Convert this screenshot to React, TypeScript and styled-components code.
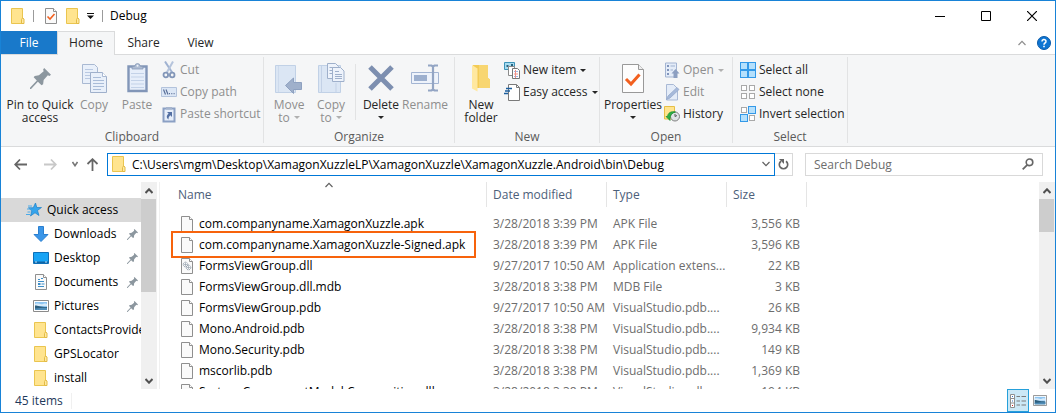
import React from "react";
import styled, { createGlobalStyle, css } from "styled-components";

const Global = createGlobalStyle`
  *, *::before, *::after { box-sizing: border-box; }
  html, body, #root { height: 100%; }
  body { margin: 0; background: #fff; overflow: hidden; }
  body, button, input, table {
    font-family: "Open Sans", "Noto Sans", "Segoe UI", sans-serif;
    font-size: 12px;
    line-height: 16px;
    color: #000;
  }
  button { border: 0; padding: 0; margin: 0; background: none; cursor: default; }
  svg { display: block; flex: none; }
`;

/* ---------- window frame ---------- */

const Window = styled.main`
  display: flex;
  flex-direction: column;
  height: 100vh;
  border: 1px solid #1883d7;
  background: #fff;
`;

const TitleBar = styled.header`
  display: flex;
  align-items: center;
  flex: none;
  height: 30px;
  padding-left: 10px;
`;

const QuickTool = styled.button<{ $gap?: number }>`
  margin-right: ${(p) => p.$gap ?? 8}px;
`;

const TitleDivider = styled.span<{ $gap: number }>`
  width: 1px;
  height: 12px;
  margin-right: ${(p) => p.$gap}px;
  background: #9b9b9b;
`;

const Title = styled.h1`
  margin: 0;
  flex: 1;
  font-size: 12px;
  font-weight: 400;
`;

const CaptionButton = styled.button`
  display: grid;
  place-items: center;
  width: 46px;
  height: 30px;
`;

/* ---------- ribbon ---------- */

const Tabs = styled.nav`
  display: flex;
  align-items: center;
  flex: none;
  height: 23px;
`;

const Tab = styled.button<{ $kind?: "file" | "active" }>`
  width: 57px;
  height: 23px;
  color: #262626;
  ${(p) => p.$kind === "file" && css`
    width: 56px;
    background: #1979ca;
    color: #fff;
  `}
  ${(p) => p.$kind === "active" && css`
    position: relative;
    width: 58px;
    height: 24px;
    margin-bottom: -1px;
    padding-bottom: 1px;
    background: #f5f6f7;
    border: 1px solid #dadbdc;
    border-bottom: 0;
  `}
`;

const TabSpacer = styled.span`
  flex: 1;
`;

const TabTool = styled.button`
  display: grid;
  place-items: center;
  width: 22px;
  height: 22px;
`;

const Ribbon = styled.section`
  display: flex;
  flex: none;
  height: 93px;
  padding: 2px 0 3px;
  background: #f5f6f7;
  border-top: 1px solid #dadbdc;
  border-bottom: 1px solid #dadbdc;
`;

const Group = styled.section<{ $width: number }>`
  display: flex;
  flex-direction: column;
  flex: none;
  width: ${(p) => p.$width}px;
  border-right: 1px solid #e2e3e4;
`;

const GroupBody = styled.div<{ $pad?: number }>`
  display: flex;
  flex: 1;
  padding: 2px 0 0 ${(p) => p.$pad ?? 0}px;
`;

const GroupTitle = styled.h2`
  margin: 0;
  font-size: 12px;
  font-weight: 400;
  line-height: 12px;
  text-align: center;
  color: #5a5a5a;
`;

const BigButton = styled.button<{ $width: number }>`
  display: flex;
  flex-direction: column;
  align-items: center;
  width: ${(p) => p.$width}px;
  padding-top: 3px;
  line-height: 13px;
  white-space: nowrap;
  color: #262626;
  &:disabled { color: #8e8e8e; }
`;

const BigIcon = styled.span`
  display: grid;
  place-items: center;
  height: 32px;
  margin-bottom: 4px;
`;

const BigLine = styled.span`
  display: flex;
  align-items: center;
  justify-content: center;
  gap: 4px;
  height: 13px;
`;

const InnerDivider = styled.span`
  width: 1px;
  height: 56px;
  margin: 5px 4px 0 4px;
  background: #e2e3e4;
`;

const SmallList = styled.div<{ $pad?: number }>`
  display: flex;
  flex-direction: column;
  align-items: flex-start;
  padding-left: ${(p) => p.$pad ?? 0}px;
`;

const SmallButton = styled.button`
  display: flex;
  align-items: center;
  gap: 3px;
  height: 22px;
  white-space: nowrap;
  color: #262626;
  &:disabled { color: #8e8e8e; }
`;

const SmallArrow = styled.span`
  margin-left: 1px;
`;

/* ---------- address row ---------- */

const AddressRow = styled.div`
  display: flex;
  align-items: center;
  flex: none;
  height: 35px;
  padding: 0 12px 1px 11px;
`;

const NavButton = styled.button<{ $width: number }>`
  display: grid;
  place-items: center;
  width: ${(p) => p.$width}px;
  height: 22px;
`;

const AddressBox = styled.label`
  display: flex;
  align-items: center;
  flex: 1;
  min-width: 0;
  height: 23px;
  padding: 0 4px;
  border: 1px solid #0078d7;
`;

const TextInput = styled.input`
  flex: 1;
  min-width: 0;
  height: 20px;
  margin: 0;
  padding: 0;
  border: 0;
  outline: 0;
  background: none;
  &::placeholder { color: #6d6d6d; opacity: 1; }
`;

const AddressInput = styled(TextInput)`
  padding-left: 6px;
`;

const RefreshButton = styled.button`
  display: grid;
  place-items: center;
  width: 18px;
  height: 23px;
  margin-right: 12px;
  border: 1px solid #d9d9d9;
  border-left: 0;
`;

const SearchBox = styled.label`
  display: flex;
  align-items: center;
  flex: 0 1 238px;
  height: 23px;
  padding: 0 8px;
  border: 1px solid #d9d9d9;
`;

/* ---------- body ---------- */

const Body = styled.div`
  display: flex;
  flex: 1;
  min-height: 0;
  overflow: hidden;
`;

const Sidebar = styled.nav`
  flex: none;
  width: 140px;
  padding-top: 16px;
  overflow: hidden;
`;

const Place = styled.a<{ $root?: boolean }>`
  display: flex;
  align-items: center;
  height: 24px;
  padding-left: ${(p) => (p.$root ? 25 : 32)}px;
  background: ${(p) => (p.$root ? "#d9d9d9" : "transparent")};
  color: #000;
  text-decoration: none;
  white-space: nowrap;
`;

const PlaceIcon = styled.span`
  display: grid;
  place-items: center;
  width: 16px;
  margin-right: 5px;
  flex: none;
`;

const PlaceName = styled.span`
  flex: 1;
`;

const PlacePin = styled.span`
  margin-right: 3px;
`;

const ScrollBar = styled.div`
  display: flex;
  flex-direction: column;
  flex: none;
  width: 16px;
  background: #f0f0f0;
`;

const ScrollArrow = styled.button`
  display: grid;
  place-items: center;
  width: 16px;
  height: 17px;
`;

const ScrollTrack = styled.div`
  flex: 1;
`;

const ScrollThumb = styled.div<{ $share: number }>`
  width: 15px;
  height: ${(p) => p.$share}%;
  background: #cdcdcd;
`;

const Files = styled.section`
  flex: 1;
  min-width: 0;
  margin-left: 2px;
  padding-left: 12px;
  border-left: 1px solid #f0f0f0;
  overflow: hidden;
`;

const FileTable = styled.table`
  width: 100%;
  table-layout: fixed;
  border-collapse: separate;
  border-spacing: 0;
  tbody::before {
    content: "";
    display: block;
    height: 6px;
  }
`;

const Col = styled.col<{ $width?: number }>`
  width: ${(p) => (p.$width ? `${p.$width}px` : "auto")};
`;

const Head = styled.th`
  position: relative;
  height: 25px;
  padding: 0 0 0 6px;
  border-right: 1px solid #e5e5e5;
  font-weight: 400;
  text-align: left;
  color: #4c607a;
`;

const SortMark = styled.span`
  position: absolute;
  top: 0;
  left: 50%;
  margin-left: -4px;
`;

const Cell = styled.td`
  height: 21px;
  padding: 0 0 0 6px;
  white-space: nowrap;
  color: #6d6d6d;
`;

const SizeCell = styled(Cell)`
  padding-right: 7px;
  text-align: right;
`;

const NameCell = styled(Cell)`
  padding-left: 2px;
`;

const FileName = styled.span<{ $marked?: boolean }>`
  display: inline-flex;
  align-items: center;
  gap: 6px;
  height: 21px;
  padding: 0 8px 0 7px;
  vertical-align: top;
  color: #000;
  ${(p) => p.$marked && css`
    outline: 2px solid #f7630c;
    outline-offset: 1px;
  `}
`;

/* ---------- status bar ---------- */

const StatusBar = styled.footer`
  display: flex;
  align-items: center;
  flex: none;
  height: 23px;
  padding: 0 4px 0 14px;
  color: #1e395b;
`;

const Count = styled.span`
  flex: 1;
`;

const CountLabel = styled.span`
  display: inline-block;
  padding-right: 8px;
  border-right: 1px solid #f0f0f0;
`;

const ViewButton = styled.button<{ $on?: boolean }>`
  display: grid;
  place-items: center;
  width: 22px;
  height: 23px;
  border: 1px solid ${(p) => (p.$on ? "#26a0da" : "transparent")};
  background: ${(p) => (p.$on ? "#cbe8f6" : "transparent")};
`;

/* ---------- drawings ---------- */

const Folder = () => (
  <svg width="14" height="16" viewBox="0 0 14 16">
    <path d="M.5.5h11v9.5l1 1v4.5H.5z" fill="#ffe48f" stroke="#eac54f" />
    <path d="M10.5 15.5v-4l1-1.5 1.5 1v4.5z" fill="#ffe9a2" stroke="#e3bb45" />
  </svg>
);

const Page = ({ children }: { children?: React.ReactNode }) => (
  <svg width="12" height="16" viewBox="0 0 12 16">
    <path d="M.5.5h8l3 3v12H.5z" fill="#fafafa" stroke="#8f8f8f" />
    <path d="M8.5.5v3h3" fill="#fff" stroke="#8f8f8f" />
    {children}
  </svg>
);

const Gears = () => (
  <Page>
    <g fill="none" stroke="#8795a3">
      <circle cx="4.5" cy="6.5" r="2.3" strokeDasharray="1.2 .6" />
      <circle cx="4.5" cy="6.5" r=".7" />
      <circle cx="7.5" cy="9.5" r="2.3" strokeDasharray="1.2 .6" />
      <circle cx="7.5" cy="9.5" r=".7" />
    </g>
  </Page>
);

const Pushpin = ({ size, color = "#8c979f" }: { size: number; color?: string }) => (
  <svg width={size} height={size} viewBox="0 0 20 20">
    <path d="M13.5 0 20 6.5 18.5 7.5 17 7 13 11.5 12.5 15.5 11 16.5 7.5 13 1 20H0v-1.2L6.5 12 3.5 8.7 4.5 7.5 8.5 7 13 3 12.5 1.5z" fill={color} />
  </svg>
);

const Triangle = ({ color = "#262626" }: { color?: string }) => (
  <svg width="6" height="3" viewBox="0 0 6 3">
    <path d="M0 0h6L3 3z" fill={color} />
  </svg>
);

const SheetPair = () => (
  <svg width="25" height="29" viewBox="0 0 25 29">
    <g fill="#e9f0fa" stroke="#a9b9d2">
      <path d="M.5.5h12l3 3v16H.5z" />
      <path d="M3 5.5h8M3 8.5h10M3 11.5h6M3 14.5h6" stroke="#b9c9e2" />
      <path d="M8.5 8.5h12l4 4v16h-16z" stroke="#9fb0cb" />
      <path d="M20.5 8.5v4h4" fill="#fff" />
      <path d="M11 13.5h8M11 16.5h11M11 19.5h11M11 22.5h11M11 25.5h8" stroke="#a9bcd8" />
    </g>
  </svg>
);

const Clipboard = () => (
  <svg width="21" height="30" viewBox="0 0 21 30">
    <path d="M1.5 3.5h18v24.5h-18z" fill="#e6eefa" stroke="#8296b8" strokeWidth="2.4" />
    <path d="M5 6V4l3-1a2.500 2.500 0 0 1 5 0l3 1v2z" fill="#aebcd2" stroke="#8c9dba" strokeWidth=".8" />
    <circle cx="10.5" cy="2.8" r="1" fill="#eef3fa" />
    <path d="M4 10.5h13M4 14h13M4 17.5h13M4 21h13M4 24.5h13" stroke="#c3d2e8" />
  </svg>
);

const Scissors = () => (
  <svg width="16" height="18" viewBox="0 0 16 18" fill="none">
    <path d="M4 .5 11.500 12" stroke="#9fb2d1" strokeWidth="2" />
    <path d="M12 .5 5.500 12" stroke="#b5c4dc" strokeWidth="2" />
    <circle cx="4.8" cy="14" r="2.300" stroke="#8296b8" strokeWidth="1.800" />
    <circle cx="11.2" cy="14" r="2.300" stroke="#8296b8" strokeWidth="1.800" />
  </svg>
);

const PathTag = () => (
  <svg width="16" height="10" viewBox="0 0 16 10">
    <path d="M.5.5h15v9H.5z" fill="#dce7f6" stroke="#b3c3dc" />
    <path d="m2.500 2.500 2 5m.5-5 2 5" stroke="#5a6f98" fill="none" strokeWidth="1.200" />
    <path d="M8 6h1v1.200H8zM10.300 6h1v1.200h-1zM12.600 6h1v1.200h-1z" fill="#5a6f98" />
  </svg>
);

const ShortcutClip = () => (
  <svg width="16" height="17" viewBox="0 0 16 17">
    <path d="M2.500 2.500h11v13h-11z" fill="#e6eefa" stroke="#8ba0c4" strokeWidth="2" />
    <path d="M5 1h6v2.500H5z" fill="#a5b4cd" />
    <path d="M6 6h5v5L9.300 9.300C8 10.500 7.500 11.500 7.500 13.500 5 11.500 5.500 9.500 7.600 7.600z" fill="#5470a3" />
  </svg>
);

const MoveTo = () => (
  <svg width="28" height="31" viewBox="0 0 28 31">
    <path d="M.5 2.500h20v27H.5z" fill="#dbe6f4" stroke="#c1d1e6" />
    <path d="M3.500 3v26" stroke="#cddaec" />
    <path d="m10.500 22.500 8-7.500v4.500h8v7h-8V30.500z" fill="#9fb0cb" stroke="#8ea1c0" />
  </svg>
);

const CopyTo = () => (
  <svg width="27" height="31" viewBox="0 0 27 31">
    <path d="M.5 2.500h22v27H.5z" fill="#dbe6f4" stroke="#c1d1e6" />
    <path d="M3.500 3v26M18 29V20" stroke="#c3d1e6" />
    <g fill="#eef3fb" stroke="#9fb0cb">
      <path d="M9.500.5h8l3 3v12h-11z" />
      <path d="M11.500 4.500h5M11.500 7.500h3M11.500 10.500h3" />
      <path d="M14.500 4.500h8l3.500 3.500v10.500H14.500z" />
      <path d="M17 8.500h4M17 11.500h7M17 13.500h7M17 15.500h7" />
    </g>
  </svg>
);

const Cross = () => (
  <svg width="26" height="26" viewBox="0 0 26 26">
    <path d="m2 2 22 22M24 2 2 24" stroke="#7d8fb0" strokeWidth="5" />
  </svg>
);

const RenameIcon = () => (
  <svg width="28" height="28" viewBox="0 0 28 28" fill="none">
    <path d="M.5 8.500h27v11H.5z" fill="#eef3fb" stroke="#a3b5d3" />
    <path d="M3 11h13v6H3z" fill="#9db0cf" />
    <path d="M17 1.500h3.500l1.500 1 1.500-1H27M17 26.500h3.500l1.500-1 1.500 1H27M22 2v24" stroke="#93a5c4" strokeWidth="2.200" />
  </svg>
);

const NewFolder = () => (
  <svg width="20" height="28" viewBox="0 0 20 28">
    <path d="M2 1h15v13l2 1.500V24H3z" fill="#f3cb55" />
    <path d="M8 1h9v13l2 1.500V24H8z" fill="#f8d671" />
    <path d="M1 1 6.500 4.500V27.500L1 24.500z" fill="#ffe8a0" />
  </svg>
);

const NewItem = () => (
  <svg width="16" height="17" viewBox="0 0 16 17">
    <path d="M.5.5h10v7H.5z" fill="#a8dcf0" stroke="#3c93b8" />
    <path d="M2.500 3h2v2h-2zM7 2h2v2H7z" fill="#27617e" />
    <path d="M4.500 4.500h6v9h-6z" fill="#fff" stroke="#8b8b8b" />
    <path d="M8.500 6.500h5l2 2v8h-7z" fill="#fff" stroke="#777" />
    <path d="M10 9.500h4M10 14.500h4" stroke="#9bb7e6" />
    <path d="M10 12h4M11.500 8v8" stroke="#ef8f86" />
  </svg>
);

const EasyAccess = () => (
  <svg width="16" height="17" viewBox="0 0 16 17">
    <path d="M4.500.5h8l3 3v13h-11z" fill="#fff" stroke="#7a7a7a" />
    <path d="M12.500.5v3h3" fill="none" stroke="#7a7a7a" />
    <path d="M2 4.500h6M1 7h5M0 9.500h4" stroke="#1c5f9e" strokeWidth="1.300" />
  </svg>
);

const Properties = () => (
  <svg width="22" height="29" viewBox="0 0 22 29">
    <path d="M.5.5h16l5 5v23H.5z" fill="#fdfdfd" stroke="#999" />
    <path d="M16.500.5v5h5" fill="#eee" stroke="#999" />
    <path d="m4 15 5 5 8.500-9.500" fill="none" stroke="#f2601f" strokeWidth="3" />
  </svg>
);

const OpenIcon = () => (
  <svg width="16" height="17" viewBox="0 0 16 17">
    <path d="M1.500 1h11v14h-11z" fill="#e4ecf8" stroke="#a3b4d2" />
    <path d="M3 3h2v2H3zM3 7h2v2H3zM3 11h2v2H3z" fill="#8094bb" />
    <path d="M6.500 4H11M6.500 8H9" stroke="#9fb2d1" />
    <path d="m11.500 7 4 4.500h-2V16h-4v-4.500h-2z" fill="#8c9fc1" />
  </svg>
);

const EditIcon = () => (
  <svg width="16" height="17" viewBox="0 0 16 17">
    <path d="M2.500.5h7l4 4v11.500h-11z" fill="#e4ecf8" stroke="#a9b9d5" />
    <path d="M13 3.500 15 5.500 6 14 2.500 15.500 4 12z" fill="#a6b9da" stroke="#96a9cc" strokeWidth=".8" />
  </svg>
);

const HistoryIcon = () => (
  <svg width="16" height="16" viewBox="0 0 16 16">
    <path d="M.5.5h10V13H.5z" fill="#ffe48f" stroke="#e6bf45" />
    <circle cx="11" cy="10.500" r="4.500" fill="#dfe4e6" stroke="#808080" />
    <path d="M11 8v2.500l2-1" fill="none" stroke="#555" />
    <path d="M2 10.500 6 14.500V12.500C6 9 8 7 11.500 6 7 4.800 3.800 7 3.500 10.500z" fill="#2fb045" stroke="#168b2d" strokeWidth=".7" />
  </svg>
);

const SelectTiles = ({ on }: { on: boolean[] }) => (
  <svg width="16" height="16" viewBox="0 0 16 16">
    {on.map((active, i) => {
      const x = (i % 2) * 8;
      const y = Math.floor(i / 2) * 8;
      return active
        ? <rect key={i} x={x + 0.5} y={y + 0.5} width="7" height="7" fill="#b5e0fc" stroke="#3399e8" />
        : <rect key={i} x={x + 1.5} y={y + 1.5} width="5" height="5" fill="#fff" stroke="#a9a9a9" />;
    })}
  </svg>
);

const Arrow = ({ turn = 0, color = "#666" }: { turn?: number; color?: string }) => (
  <svg width="13" height="13" viewBox="0 0 13 13">
    <path d="M6 1.500 1.200 6.500 6 11.500M1.500 6.500H13" fill="none" stroke={color} strokeWidth="1.800" transform={`rotate(${turn} 6.500 6.500)`} />
  </svg>
);

const Chevron = ({ up, width = 8, weight = 1.2, color = "#606060" }: { up?: boolean; width?: number; weight?: number; color?: string }) => (
  <svg width={width} height="6" viewBox={`0 0 ${width} 6`}>
    <path d={up ? `M.5 5 ${width / 2} 1.300 ${width - 0.5} 5` : `M.5 1 ${width / 2} 4.700 ${width - 0.5} 1`} fill="none" stroke={color} strokeWidth={weight} />
  </svg>
);

const Star = () => (
  <svg width="16" height="14" viewBox="0 0 16 14">
    <path d="m9.500 0 1.300 4.500h4.700l-4 3 1.500 5L9 9.800 4.500 13l1.300-5L2.500 4.800h4.700z" fill="#35a4ec" stroke="#1a7fc8" strokeWidth=".7" />
    <path d="M2 3h4M1 6h4M1.500 9h3M0 11.500h4" stroke="#4aaae8" />
  </svg>
);

const Download = () => (
  <svg width="16" height="16" viewBox="0 0 16 16">
    <path d="M5.500.5h5v8h4.500L8 15.500 1 8.500h4.500z" fill="#3b96e8" stroke="#2a7fd0" />
  </svg>
);

const Monitor = () => (
  <svg width="16" height="12" viewBox="0 0 16 12">
    <path d="M.5.5h15v11H.5z" fill="#18a4f5" stroke="#0e70b8" />
    <path d="M1 9.500h14V11H1z" fill="#0f64a5" />
    <path d="M2 10h2M12 10h2" stroke="#bfe5ff" />
  </svg>
);

const DocumentIcon = () => (
  <Page>
    <path d="M3 5.500h2M6 4.500h2M3 7.500h6M3 12.500h6M6.500 10h3" stroke="#3d8ec9" />
    <path d="M3 9h2.500v2H3z" fill="#3d8ec9" />
  </Page>
);

const Photo = ({ width = 16, height = 12 }: { width?: number; height?: number }) => (
  <svg width={width} height={height} viewBox="0 0 16 12" preserveAspectRatio="none">
    <path d="M.5.5h15v11H.5z" fill="#fff" stroke="#8b8b8b" />
    <path d="M2 2h12v8H2z" fill="#8fc6f2" />
    <path d="M2 4c3-1.500 5 1 8 0s3 0 4 0v2H2z" fill="#d7ebfa" />
    <path d="M2 5.500c3 0 5 1.500 12 1.500v3H2z" fill="#2d5f7e" />
    <path d="M2 8.500c5 0 8-1 12-.5v2H2z" fill="#4f8db8" />
  </svg>
);

const DetailsIcon = () => (
  <svg width="16" height="14" viewBox="0 0 16 14">
    <path d="M.5.5h4v13h-4zM.5 4.500h4M.5 9h4" fill="#fff" stroke="#8f8f8f" />
    <path d="M6.500 2.500H10M11.500 2.500H16M6.500 7H10M11.500 7H16M6.500 11H10M11.500 11H16" stroke="#7b7b7b" />
    <path d="M2 2h1v1H2zM2 6.500h1v1H2z" fill="#3273c4" />
    <path d="M2 11h1v1H2z" fill="#c22" />
  </svg>
);

/* ---------- pieces ---------- */

interface BigProps {
  icon: React.ReactNode;
  lines: string[];
  width: number;
  menu?: boolean;
  disabled?: boolean;
}

function Big({ icon, lines, width, menu, disabled }: BigProps) {
  const arrow = menu && <Triangle color={disabled ? "#b0b0b0" : "#262626"} />;
  return (
    <BigButton $width={width} disabled={disabled}>
      <BigIcon>{icon}</BigIcon>
      {lines.map((line, i) => (
        <BigLine key={line}>{line}{i === 1 && arrow}</BigLine>
      ))}
      {lines.length === 1 && <BigLine>{arrow}</BigLine>}
    </BigButton>
  );
}

interface SmallProps {
  icon: React.ReactNode;
  label: string;
  menu?: boolean;
  disabled?: boolean;
}

function Small({ icon, label, menu, disabled }: SmallProps) {
  return (
    <SmallButton disabled={disabled}>
      {icon}
      {label}
      {menu && <SmallArrow><Triangle color={disabled ? "#b0b0b0" : "#262626"} /></SmallArrow>}
    </SmallButton>
  );
}

function Scroller({ share }: { share: number }) {
  return (
    <ScrollBar>
      <ScrollArrow aria-label="Scroll up"><Chevron up weight={2} color="#505050" /></ScrollArrow>
      <ScrollTrack><ScrollThumb $share={share} /></ScrollTrack>
      <ScrollArrow aria-label="Scroll down"><Chevron weight={2} color="#505050" /></ScrollArrow>
    </ScrollBar>
  );
}

const places = [
  { name: "Downloads", icon: <Download />, pinned: true },
  { name: "Desktop", icon: <Monitor />, pinned: true },
  { name: "Documents", icon: <DocumentIcon />, pinned: true },
  { name: "Pictures", icon: <Photo />, pinned: true },
  { name: "ContactsProvider", icon: <Folder /> },
  { name: "GPSLocator", icon: <Folder /> },
  { name: "install", icon: <Folder /> },
];

const files = [
  ["com.companyname.XamagonXuzzle.apk", "3/28/2018 3:39 PM", "APK File", "3,556 KB"],
  ["com.companyname.XamagonXuzzle-Signed.apk", "3/28/2018 3:39 PM", "APK File", "3,596 KB"],
  ["FormsViewGroup.dll", "9/27/2017 10:50 AM", "Application extens...", "22 KB"],
  ["FormsViewGroup.dll.mdb", "3/28/2018 3:38 PM", "MDB File", "3 KB"],
  ["FormsViewGroup.pdb", "9/27/2017 10:50 AM", "VisualStudio.pdb....", "26 KB"],
  ["Mono.Android.pdb", "3/28/2018 3:38 PM", "VisualStudio.pdb....", "9,934 KB"],
  ["Mono.Security.pdb", "3/28/2018 3:38 PM", "VisualStudio.pdb....", "149 KB"],
  ["mscorlib.pdb", "3/28/2018 3:38 PM", "VisualStudio.pdb....", "1,369 KB"],
  ["System.ComponentModel.Composition.dll", "3/28/2018 3:38 PM", "VisualStudio.pdb....", "194 KB"],
];

export default function App() {
  return (
    <>
      <Global />
      <Window>
        <TitleBar>
          <QuickTool aria-label="Window menu"><Folder /></QuickTool>
          <TitleDivider $gap={11} />
          <QuickTool $gap={9} aria-label="Properties">
            <Page><path d="m2.500 8.500 2.500 2.500 4.500-5" fill="none" stroke="#f2601f" strokeWidth="1.600" /></Page>
          </QuickTool>
          <QuickTool $gap={7} aria-label="New folder"><Folder /></QuickTool>
          <QuickTool aria-label="Customize quick access toolbar">
            <svg width="7" height="6" viewBox="0 0 7 6"><path d="M0 0h7v1H0zM0 2.500h7L3.500 6z" fill="#111" /></svg>
          </QuickTool>
          <TitleDivider $gap={7} />
          <Title>Debug</Title>
          <CaptionButton aria-label="Minimize">
            <svg width="10" height="10" viewBox="0 0 10 10"><path d="M0 5.500h10" stroke="#000" /></svg>
          </CaptionButton>
          <CaptionButton aria-label="Maximize">
            <svg width="10" height="10" viewBox="0 0 10 10"><path d="M.5.5h9v9h-9z" fill="none" stroke="#000" /></svg>
          </CaptionButton>
          <CaptionButton aria-label="Close">
            <svg width="10" height="10" viewBox="0 0 10 10"><path d="m0 0 10 10M10 0 0 10" stroke="#000" strokeWidth="1.200" /></svg>
          </CaptionButton>
        </TitleBar>

        <Tabs>
          <Tab $kind="file">File</Tab>
          <Tab $kind="active">Home</Tab>
          <Tab>Share</Tab>
          <Tab>View</Tab>
          <TabSpacer />
          <TabTool aria-label="Collapse ribbon"><Chevron up color="#8e8e8e" /></TabTool>
          <TabTool aria-label="Help">
            <svg width="14" height="14" viewBox="0 0 14 14">
              <circle cx="7" cy="7" r="6.500" fill="#0f75d2" stroke="#0a5aa8" />
              <path d="M5 5.500a2 1.900 0 1 1 3 1.500Q7 7.600 7 8.700" fill="none" stroke="#fff" strokeWidth="1.500" />
              <path d="M6.200 9.800h1.600v1.500H6.200z" fill="#fff" />
            </svg>
          </TabTool>
        </Tabs>

        <Ribbon>
          <Group $width={263}>
            <GroupBody $pad={6}>
              <Big icon={<Pushpin size={21} />} lines={["Pin to Quick", "access"]} width={66} />
              <Big icon={<SheetPair />} lines={["Copy"]} width={42} disabled />
              <Big icon={<Clipboard />} lines={["Paste"]} width={44} disabled />
              <SmallList $pad={2}>
                <Small icon={<Scissors />} label="Cut" disabled />
                <Small icon={<PathTag />} label="Copy path" disabled />
                <Small icon={<ShortcutClip />} label="Paste shortcut" disabled />
              </SmallList>
            </GroupBody>
            <GroupTitle>Clipboard</GroupTitle>
          </Group>

          <Group $width={191}>
            <GroupBody $pad={3}>
              <Big icon={<MoveTo />} lines={["Move", "to"]} width={44} menu disabled />
              <Big icon={<CopyTo />} lines={["Copy", "to"]} width={40} menu disabled />
              <InnerDivider />
              <Big icon={<Cross />} lines={["Delete"]} width={42} menu />
              <Big icon={<RenameIcon />} lines={["Rename"]} width={46} disabled />
            </GroupBody>
            <GroupTitle>Organize</GroupTitle>
          </Group>

          <Group $width={145}>
            <GroupBody $pad={3}>
              <Big icon={<NewFolder />} lines={["New", "folder"]} width={46} />
              <SmallList>
                <Small icon={<NewItem />} label="New item" menu />
                <Small icon={<EasyAccess />} label="Easy access" menu />
              </SmallList>
            </GroupBody>
            <GroupTitle>New</GroupTitle>
          </Group>

          <Group $width={133}>
            <GroupBody $pad={2}>
              <Big icon={<Properties />} lines={["Properties"]} width={62} menu />
              <SmallList>
                <Small icon={<OpenIcon />} label="Open" menu disabled />
                <Small icon={<EditIcon />} label="Edit" disabled />
                <Small icon={<HistoryIcon />} label="History" />
              </SmallList>
            </GroupBody>
            <GroupTitle>Open</GroupTitle>
          </Group>

          <Group $width={115}>
            <GroupBody $pad={7}>
              <SmallList>
                <Small icon={<SelectTiles on={[true, true, true, true]} />} label="Select all" />
                <Small icon={<SelectTiles on={[false, false, false, false]} />} label="Select none" />
                <Small icon={<SelectTiles on={[false, true, true, false]} />} label="Invert selection" />
              </SmallList>
            </GroupBody>
            <GroupTitle>Select</GroupTitle>
          </Group>
        </Ribbon>

        <AddressRow>
          <NavButton $width={16} aria-label="Back"><Arrow /></NavButton>
          <NavButton $width={44} aria-label="Forward"><Arrow turn={180} color="#c8c8c8" /></NavButton>
          <NavButton $width={6} aria-label="Recent locations"><Chevron width={6} weight={1.6} color="#777" /></NavButton>
          <NavButton $width={29} aria-label="Up"><Arrow turn={90} /></NavButton>
          <AddressBox>
            <Folder />
            <AddressInput aria-label="Address" defaultValue="C:\Users\mgm\Desktop\XamagonXuzzleLP\XamagonXuzzle\XamagonXuzzle.Android\bin\Debug" />
            <Chevron />
          </AddressBox>
          <RefreshButton aria-label="Refresh">
            <svg width="11" height="12" viewBox="0 0 11 12">
              <path d="M8 3.200A4.200 4.200 0 1 1 3 3.200" fill="none" stroke="#666" strokeWidth="1.700" />
              <path d="M1 1h5v5z" fill="#666" />
            </svg>
          </RefreshButton>
          <SearchBox>
            <TextInput aria-label="Search Debug" placeholder="Search Debug" />
            <svg width="12" height="12" viewBox="0 0 12 12">
              <circle cx="7.500" cy="4.300" r="3.300" fill="none" stroke="#666" strokeWidth="1.600" />
              <path d="M5.300 6.800.7 11.300" stroke="#666" strokeWidth="1.800" />
            </svg>
          </SearchBox>
        </AddressRow>

        <Body>
          <Sidebar>
            <Place href="#quick-access" $root>
              <PlaceIcon><Star /></PlaceIcon>
              <PlaceName>Quick access</PlaceName>
            </Place>
            {places.map((place) => (
              <Place key={place.name} href={`#${place.name}`}>
                <PlaceIcon>{place.icon}</PlaceIcon>
                <PlaceName>{place.name}</PlaceName>
                {place.pinned && <PlacePin><Pushpin size={11} /></PlacePin>}
              </Place>
            ))}
          </Sidebar>
          <Scroller share={54} />

          <Files>
            <FileTable>
              <colgroup>
                <Col $width={315} />
                <Col $width={120} />
                <Col $width={120} />
                <Col $width={80} />
                <Col />
              </colgroup>
              <thead>
                <tr>
                  <Head>Name<SortMark><Chevron up /></SortMark></Head>
                  <Head>Date modified</Head>
                  <Head>Type</Head>
                  <Head>Size</Head>
                  <td />
                </tr>
              </thead>
              <tbody>
                {files.map(([name, date, type, size], i) => (
                  <tr key={name}>
                    <NameCell>
                      <FileName $marked={i === 1}>
                        {name === "FormsViewGroup.dll" ? <Gears /> : <Page />}
                        {name}
                      </FileName>
                    </NameCell>
                    <Cell>{date}</Cell>
                    <Cell>{type}</Cell>
                    <SizeCell>{size}</SizeCell>
                    <td />
                  </tr>
                ))}
              </tbody>
            </FileTable>
          </Files>
          <Scroller share={19} />
        </Body>

        <StatusBar>
          <Count><CountLabel>45 items</CountLabel></Count>
          <ViewButton $on aria-label="Details view"><DetailsIcon /></ViewButton>
          <ViewButton aria-label="Large thumbnails view"><Photo width={14} height={11} /></ViewButton>
        </StatusBar>
      </Window>
    </>
  );
}
